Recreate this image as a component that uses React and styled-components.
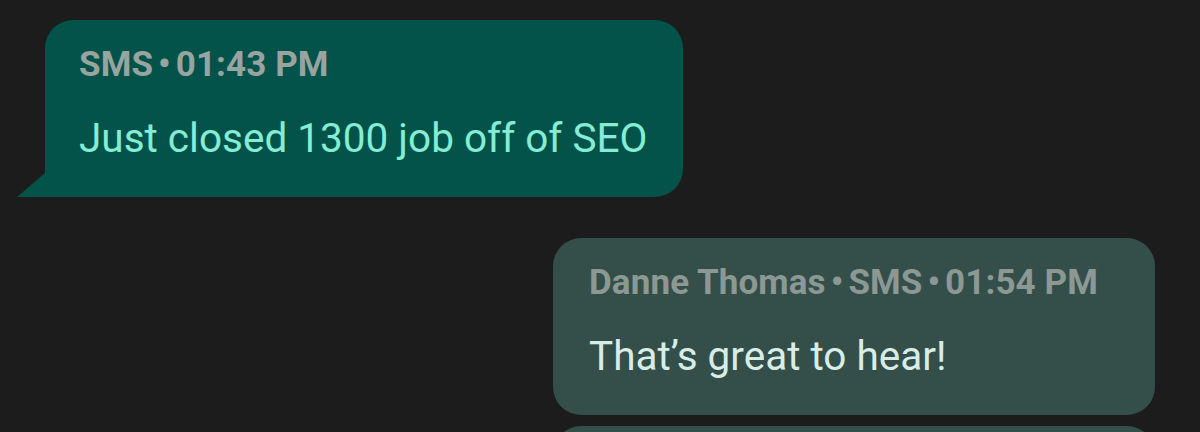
import React from "react";
import styled, { createGlobalStyle } from "styled-components";

const GlobalStyle = createGlobalStyle`
  html, body {
    margin: 0;
    padding: 0;
    background: #1b1c1b;
  }
  body {
    font-family: Roboto, "Noto Sans", sans-serif;
    -webkit-font-smoothing: antialiased;
  }
`;

const Thread = styled.div`
  display: flex;
  flex-direction: column;
  padding: 20px 45px 0 45px;
  height: 432px;
  box-sizing: border-box;
  overflow: hidden;
`;

const Bubble = styled.div`
  position: relative;
  align-self: ${(p) => (p.$out ? "flex-end" : "flex-start")};
  background: ${(p) => (p.$out ? "#344f49" : "#03534b")};
  border-radius: ${(p) => (p.$tail ? "28px 28px 28px 0" : "28px")};
  padding: ${(p) => (p.$out ? "25px 57px 35px 36px" : "25px 36px 35px 34px")};
  margin-top: ${(p) => p.$gap || 0}px;
  min-height: ${(p) => (p.$empty ? "177px" : "0")};
  width: ${(p) => (p.$empty ? "602px" : "auto")};
  box-sizing: border-box;
  flex-shrink: 0;

  &::before {
    content: "";
    display: ${(p) => (p.$tail ? "block" : "none")};
    position: absolute;
    left: -28px;
    bottom: 0;
    width: 28px;
    height: 24px;
    background: inherit;
    clip-path: polygon(100% 0, 100% 100%, 0 100%);
  }
`;

const Meta = styled.div`
  font-size: 35px;
  line-height: 40px;
  font-weight: 700;
  letter-spacing: 0.1px;
  color: ${(p) => (p.$out ? "#8c9893" : "#98a49f")};
  white-space: nowrap;
`;

const Dot = styled.span`
  margin: 0 5px;
`;

const Body = styled.div`
  margin-top: 29px;
  font-size: 40.5px;
  line-height: 48px;
  font-weight: 400;
  color: ${(p) => (p.$out ? "#d9ede7" : "#84edd4")};
  white-space: nowrap;
`;

const messages = [
  { meta: ["SMS", "01:43 PM"], text: "Just closed 1300 job off of SEO", out: false, tail: true, gap: 0 },
  { meta: ["Danne Thomas", "SMS", "01:54 PM"], text: "That\u2019s great to hear!", out: true, gap: 41 },
];

export default function App() {
  return (
    <>
      <GlobalStyle />
      <Thread>
        {messages.map((m, i) => (
          <Bubble key={i} $out={m.out} $tail={m.tail} $gap={m.gap}>
            <Meta $out={m.out}>
              {m.meta.map((part, j) => (
                <React.Fragment key={j}>
                  {j > 0 && <Dot>•</Dot>}
                  {part}
                </React.Fragment>
              ))}
            </Meta>
            <Body $out={m.out}>{m.text}</Body>
          </Bubble>
        ))}
        {/* next message, scrolled below the fold */}
        <Bubble $out $empty $gap={11} />
      </Thread>
    </>
  );
}
